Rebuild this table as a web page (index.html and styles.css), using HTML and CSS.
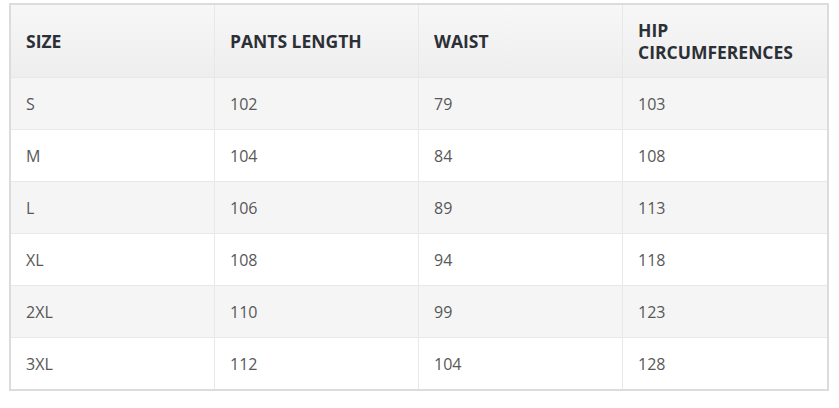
FILE: index.html
```html
<!DOCTYPE html>
<html>
<head>
<meta charset="utf-8">
<link rel="stylesheet" href="styles.css">
</head>
<body>
<table class="size-table">
  <colgroup>
    <col class="c1"><col class="c2"><col class="c3"><col class="c4">
  </colgroup>
  <thead>
    <tr><th>SIZE</th><th>PANTS LENGTH</th><th>WAIST</th><th>HIP<br>CIRCUMFERENCES</th></tr>
  </thead>
  <tbody>
    <tr><td>S</td><td>102</td><td>79</td><td>103</td></tr>
    <tr><td>M</td><td>104</td><td>84</td><td>108</td></tr>
    <tr><td>L</td><td>106</td><td>89</td><td>113</td></tr>
    <tr><td>XL</td><td>108</td><td>94</td><td>118</td></tr>
    <tr><td>2XL</td><td>110</td><td>99</td><td>123</td></tr>
    <tr><td>3XL</td><td>112</td><td>104</td><td>128</td></tr>
  </tbody>
</table>
</body>
</html>
```
FILE: styles.css
```css
html, body {
  margin: 0;
  background: #ffffff;
}
body {
  padding: 3px 0 0 9px;
  font-family: "Open Sans", "Noto Sans", sans-serif;
}
.size-table {
  width: 820px;
  border-collapse: separate;
  border-spacing: 0;
  border: 2px solid #dcdcdc;
  table-layout: fixed;
}
.c1 { width: 204px; }
.c2 { width: 204px; }
.c3 { width: 204px; }
.c4 { width: 204px; }
.size-table th,
.size-table td {
  padding: 15px 15px;
  line-height: 22px;
  text-align: left;
  vertical-align: middle;
  border-right: 1px solid #e8e8e8;
  border-bottom: 1px solid #e8e8e8;
}
.size-table th:last-child,
.size-table td:last-child {
  border-right: none;
}
.size-table tbody tr:last-child td {
  border-bottom: none;
}
.size-table th {
  font-size: 17.5px;
  font-weight: 700;
  color: #2c3036;
  background: linear-gradient(#f7f7f7, #eeeeee);
  padding-top: 14px;
  padding-bottom: 14px;
}
.size-table td {
  font-size: 16px;
  font-weight: 400;
  color: #585858;
  padding-top: 15px;
  padding-bottom: 14px;
}
.size-table tbody tr:nth-child(odd) td {
  background: #f5f5f5;
}
.size-table tbody tr:nth-child(even) td {
  background: #ffffff;
}
```
